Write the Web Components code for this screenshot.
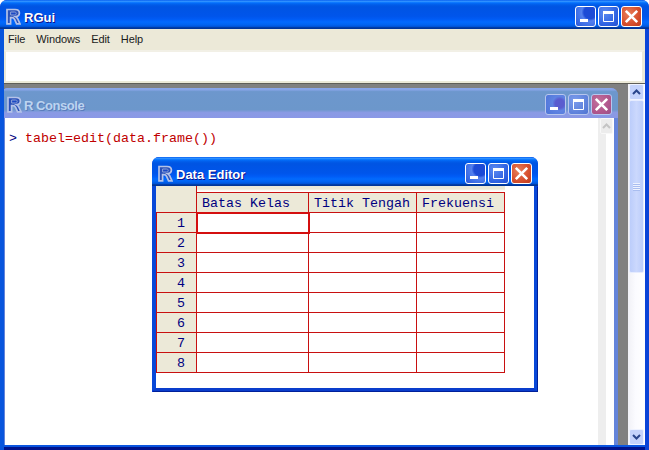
<!DOCTYPE html>
<html>
<head>
<meta charset="utf-8">
<title>RGui</title>
<style>
  html, body { margin: 0; padding: 0; background: #fff; }
  body { width: 649px; height: 450px; overflow: hidden; font-family: "Liberation Sans", sans-serif; }
</style>
</head>
<body>
<rgui-app></rgui-app>

<template id="r-logo">
  <style>
    :host { display: inline-block; width: 16px; height: 17px; flex: none; }
    svg { display: block; }
  </style>
  <svg width="16" height="17" viewBox="0 0 16 17" fill="none">
    <path d="M2 1.5H10C13 1.5 14.4 3 14.4 5C14.4 7 13.2 8.4 10.8 8.7C11.8 9.2 12.2 9.8 12.8 11L15 15.8H11.6L9.6 11.4C8.9 10 8.3 9.6 7 9.6H5.6V15.8H2Z" stroke="#b4c2e8" stroke-width="1.7" fill="#2a50b8"/>
    <path d="M5.6 4H9.4C10.6 4 11.2 4.5 11.2 5.4C11.2 6.4 10.6 7 9.4 7H5.6Z" stroke="#8fa3d8" stroke-width="1" fill="#1c49c4"/>
  </svg>
</template>

<template id="caption-button">
  <style>
    :host { display: block; width: 21px; height: 21px; flex: none; }
    .b { width: 21px; height: 21px; box-sizing: border-box; border: 1px solid #fff; border-radius: 3px; overflow: hidden; }
    svg { display: block; }
    .min { background: radial-gradient(circle at 75% 28%, #1c4ad6 0 32%, #5480ee 44%, #3e6fe6 70%, #2a55d8 100%); }
    .max { background: radial-gradient(circle at 30% 30%, #5c8af0 0, #2f62e2 65%, #2450d0 100%); }
    .close { background: radial-gradient(circle at 35% 35%, #e8805c 0, #d8512f 55%, #bd3a1c 100%); }
    :host([inactive]) .b { border-color: #b7c6ee; }
    :host([inactive]) .min { background: radial-gradient(circle at 72% 45%, #5a5ccf 0 26%, #5f83e2 42%, #4d74d8 100%); }
    :host([inactive]) .max { background: radial-gradient(circle at 30% 30%, #7c9cec 0, #5c80da 70%, #4f72d0 100%); }
    :host([inactive]) .close { background: radial-gradient(circle at 35% 35%, #c2709c 0, #b0568c 60%, #9a4f88 100%); }
  </style>
  <div class="b"></div>
</template>

<template id="xp-scrollbar">
  <style>
    :host { display: flex; flex-direction: column; width: 17px; flex: none; background: linear-gradient(90deg, #f1f1f6 0, #fbfbff 45%, #fff 100%); }
    .btn { height: 16px; margin: 0 1px; flex: none; box-sizing: border-box; border: 1px solid #eef2ff; border-radius: 2px; background: #c4d3fc; display: flex; align-items: center; justify-content: center; }
    .track { flex: 1; min-height: 0; }
    .thumb { height: 173px; margin: 0 1px; box-sizing: border-box; border: 1px solid #e6ecff; border-radius: 2px; background: linear-gradient(90deg, #bccdfb, #cbd8fd 50%, #bccdfb); display: flex; align-items: center; justify-content: center; }
    .grip { width: 7px; height: 8px; background: repeating-linear-gradient(180deg, #eef2ff 0 1px, #a9bdf0 1px 2px); }
    svg { display: block; }
    :host([inactive]) { width: 16px; background: linear-gradient(90deg, #eeeeee 0 8px, #fff 8px); }
    :host([inactive]) .btn { margin: 0 1px 0 2px; background: #ececec; border-color: #f8f8f8; }
    :host([inactive]) .thumb { display: none; }
  </style>
  <div class="btn"><svg width="9" height="6" viewBox="0 0 9 6" fill="none"><path class="c" d="M1 5L4.5 1.5L8 5" stroke="#29458c" stroke-width="2"/></svg></div>
  <div class="thumb"><div class="grip"></div></div>
  <div class="track"></div>
  <div class="btn"><svg width="9" height="6" viewBox="0 0 9 6" fill="none"><path class="c" d="M1 1L4.5 4.5L8 1" stroke="#29458c" stroke-width="2"/></svg></div>
</template>

<template id="xp-window">
  <style>
    :host { display: flex; flex-direction: column; box-sizing: border-box; border-radius: 7px 7px 0 0; overflow: hidden; background: #0831d9; }
    .bar { height: var(--bar-height, 29px); flex: none; box-sizing: border-box; display: flex; align-items: flex-start; padding: 6px var(--bar-right, 6px) 0 5px;
      background: linear-gradient(180deg, #0058ee 0, #3593ff 4%, #288eff 6%, #127dff 8%, #036ffc 10%, #0262ee 14%, #0057e5 20%, #0054e3 24%, #0055eb 56%, #005bf5 66%, #026afe 76%, #0062ef 86%, #0052d6 92%, #0040ab 94%, #003092 100%); }
    .title { flex: 1; margin: 3px 0 0 var(--title-gap, 3px); color: #fff; font: bold 13px/17px "Liberation Sans", sans-serif; text-shadow: 1px 1px 0 #0f1089; white-space: nowrap; }
    r-logo { margin-top: 2px; }
    .buttons { display: flex; gap: 2px; }
    .client { flex: 1; min-height: 0; display: flex; flex-direction: column; border: solid #0848d8; border-width: 0 4px 4px; }
    :host([inactive]) { background: #7a8fe0; }
    :host([inactive]) .bar { background: linear-gradient(180deg, #8aa6ea 0, #86a4e6 6%, #6d97cd 12%, #6c97cb 72%, #8a9ae4 82%, #8a98e6 100%); }
    :host([inactive]) .title { color: #bcd4f0; text-shadow: 1px 1px 0 #5a7cbc; letter-spacing: -0.45px; }
    :host([inactive]) .client { border-color: #6484da; }
    :host([flush]) .client { border-bottom-width: 0; border-left-color: #0855dd; border-right-color: #0a44d8; }
    :host([inactive]) .client { border-left-color: #6484da; border-right-color: #6484da; }
    :host([raised]) .client { margin: 0 1px 1px 0; border-width: 0 3px 3px 4px; border-bottom-color: #0a3dcc; box-shadow: 1px 1px 0 #00209a; }
  </style>
  <div class="bar">
    <r-logo></r-logo>
    <div class="title"></div>
    <div class="buttons">
      <caption-button kind="min"></caption-button>
      <caption-button kind="max"></caption-button>
      <caption-button kind="close"></caption-button>
    </div>
  </div>
  <div class="client"><slot></slot></div>
</template>

<template id="menu-bar">
  <style>
    :host { display: flex; height: 21px; flex: none; box-sizing: border-box; padding: 0 0 2px 4px; align-items: center; gap: 11px; background: #ece9d8; color: #1a1a1a; font: 11px "Liberation Sans", sans-serif; letter-spacing: -0.1px; }
  </style>
  <slot></slot>
</template>

<template id="tool-bar">
  <style>
    :host { display: block; height: 33px; flex: none; box-sizing: border-box; background: #fff; border: solid; border-width: 2px 3px 2px 2px; border-color: #f2f0e6 #ece9d8 #ece9d8 #ece9d8; }
  </style>
</template>

<template id="r-console">
  <style>
    :host { display: flex; flex: 1; min-height: 0; background: #fff; }
    .text { flex: 1; padding: 13px 0 0 4px; font: 13.33px/16px "Liberation Mono", monospace; white-space: pre; color: #c00000; }
    .prompt { color: #000080; }
  </style>
  <div class="text"><span class="prompt">&gt; </span><slot></slot></div>
  <xp-scrollbar inactive></xp-scrollbar>
</template>

<template id="data-grid">
  <style>
    :host { display: block; flex: 1; background: #fff; }
    .grid { display: grid; width: 349px; grid-template-columns: 41px 112px 108px 88px; grid-template-rows: 6px 21px repeat(8, 20px); background: linear-gradient(180deg, #ece9d8 0 3px, #fff 5px); font: 13.33px "Liberation Mono", monospace; color: #000080; }
    .cell { box-sizing: border-box; border: solid #c81010; border-width: 0 1px 1px 0; display: flex; align-items: center; background: #fff; padding-top: 1px; }
    .corner { grid-row: 1 / span 2; grid-column: 1; background: #ece9d8; }
    .head { grid-row: 2; background: #ece9d8; border-top-width: 1px; padding-left: 5px; white-space: pre; }
    .num { grid-column: 1; background: #ece9d8; border-left-width: 1px; justify-content: flex-end; padding-right: 11px; }
    .sel { outline: 2px solid #d40f0f; outline-offset: -1px; position: relative; z-index: 1; }
  </style>
  <div class="grid"></div>
</template>

<template id="rgui-app">
  <style>
    :host { display: block; width: 649px; height: 450px; }
    xp-window.main { height: 450px; --bar-right: 7px; }
    .shell { display: flex; flex-direction: column; height: 100%; }
    .below { flex: 1; min-height: 0; display: flex; background: #808080; border-top: 1px solid #5f5e58; }
    .mdi { flex: 1; position: relative; overflow: hidden; }
    xp-window.console { position: absolute; left: -3px; top: 4px; width: 617px; height: 400px; --bar-right: 6px; --title-gap: 2px; }
    xp-window.editor { position: absolute; left: 148px; top: 73px; width: 386px; height: 235px; --bar-right: 6px; }
    .foot { height: 2px; flex: none; background: #0a55e0; }
    .frame-bottom { height: 3px; flex: none; background: #00138c; }
  </style>
  <xp-window class="main" title="RGui" flush>
    <div class="shell" style="height: 421px">
      <menu-bar>
        <menu-item>File</menu-item>
        <menu-item>Windows</menu-item>
        <menu-item>Edit</menu-item>
        <menu-item>Help</menu-item>
      </menu-bar>
      <tool-bar></tool-bar>
      <div class="below">
        <div class="mdi">
          <xp-window class="console" title="R Console" inactive flush style="--bar-height: 30px">
            <r-console>tabel=edit(data.frame())</r-console>
          </xp-window>
          <xp-window class="editor" title="Data Editor" raised>
            <data-grid columns="Batas Kelas,Titik Tengah,Frekuensi" rows="8"></data-grid>
          </xp-window>
        </div>
        <xp-scrollbar></xp-scrollbar>
      </div>
      <div class="foot"></div>
      <div class="frame-bottom"></div>
    </div>
  </xp-window>
</template>

<script>
  // each element clones its template into an open shadow root
  class TemplateElement extends HTMLElement {
    constructor() {
      super();
      this.shadow = this.attachShadow({ mode: 'open' });
      const content = document.getElementById(this.localName).content.cloneNode(true);
      this.shadow.appendChild(content);
    }
  }

  class RLogo extends TemplateElement {}
  class MenuBar extends TemplateElement {}
  class ToolBar extends TemplateElement {}
  class RConsole extends TemplateElement {}
  class RguiApp extends TemplateElement {}

  class MenuItem extends HTMLElement {
    constructor() {
      super();
      this.attachShadow({ mode: 'open' }).innerHTML =
        '<style>:host { display: block; }</style><slot></slot>';
    }
  }

  const CAPTION_ICONS = {
    min: '<svg width="19" height="19" viewBox="0 0 19 19"><rect x="4" y="12" width="8" height="3" fill="#fff"/></svg>',
    max: '<svg width="19" height="19" viewBox="0 0 19 19" fill="none"><path d="M4.5 5.5H14.5V14.5H4.5Z" stroke="#fff"/><rect x="4" y="4" width="11" height="3" fill="#fff"/></svg>',
    close: '<svg width="19" height="19" viewBox="0 0 19 19" fill="none"><path d="M3.8 3.8L15.2 15.2M15.2 3.8L3.8 15.2" stroke="#fff" stroke-width="2.6"/></svg>'
  };

  class CaptionButton extends TemplateElement {
    connectedCallback() {
      const kind = this.getAttribute('kind');
      const box = this.shadow.querySelector('.b');
      box.classList.add(kind);
      box.innerHTML = CAPTION_ICONS[kind];
    }
  }

  class XpScrollbar extends TemplateElement {
    connectedCallback() {
      if (this.hasAttribute('inactive')) {
        for (let path of this.shadow.querySelectorAll('.c')) {
          path.setAttribute('stroke', '#c4c4c4');
        }
      }
    }
  }

  class XpWindow extends TemplateElement {
    connectedCallback() {
      this.shadow.querySelector('.title').textContent = this.getAttribute('title');
      if (this.hasAttribute('inactive')) {
        for (let button of this.shadow.querySelectorAll('caption-button')) {
          button.setAttribute('inactive', '');
        }
      }
    }
  }

  class DataGrid extends TemplateElement {
    connectedCallback() {
      const grid = this.shadow.querySelector('.grid');
      const columns = this.getAttribute('columns').split(',');
      const rows = Number(this.getAttribute('rows'));

      this.addCell(grid, 'cell corner', '');
      for (let name of columns) {
        this.addCell(grid, 'cell head', name);
      }
      for (let row = 1; row <= rows; row++) {
        this.addCell(grid, 'cell num', String(row));
        columns.forEach((name, i) => {
          this.addCell(grid, row === 1 && i === 0 ? 'cell sel' : 'cell', '');
        });
      }
    }

    addCell(grid, className, text) {
      const cell = document.createElement('div');
      cell.className = className;
      cell.textContent = text;
      grid.appendChild(cell);
    }
  }

  customElements.define('r-logo', RLogo);
  customElements.define('caption-button', CaptionButton);
  customElements.define('xp-scrollbar', XpScrollbar);
  customElements.define('xp-window', XpWindow);
  customElements.define('menu-item', MenuItem);
  customElements.define('menu-bar', MenuBar);
  customElements.define('tool-bar', ToolBar);
  customElements.define('r-console', RConsole);
  customElements.define('data-grid', DataGrid);
  customElements.define('rgui-app', RguiApp);
</script>
</body>
</html>
